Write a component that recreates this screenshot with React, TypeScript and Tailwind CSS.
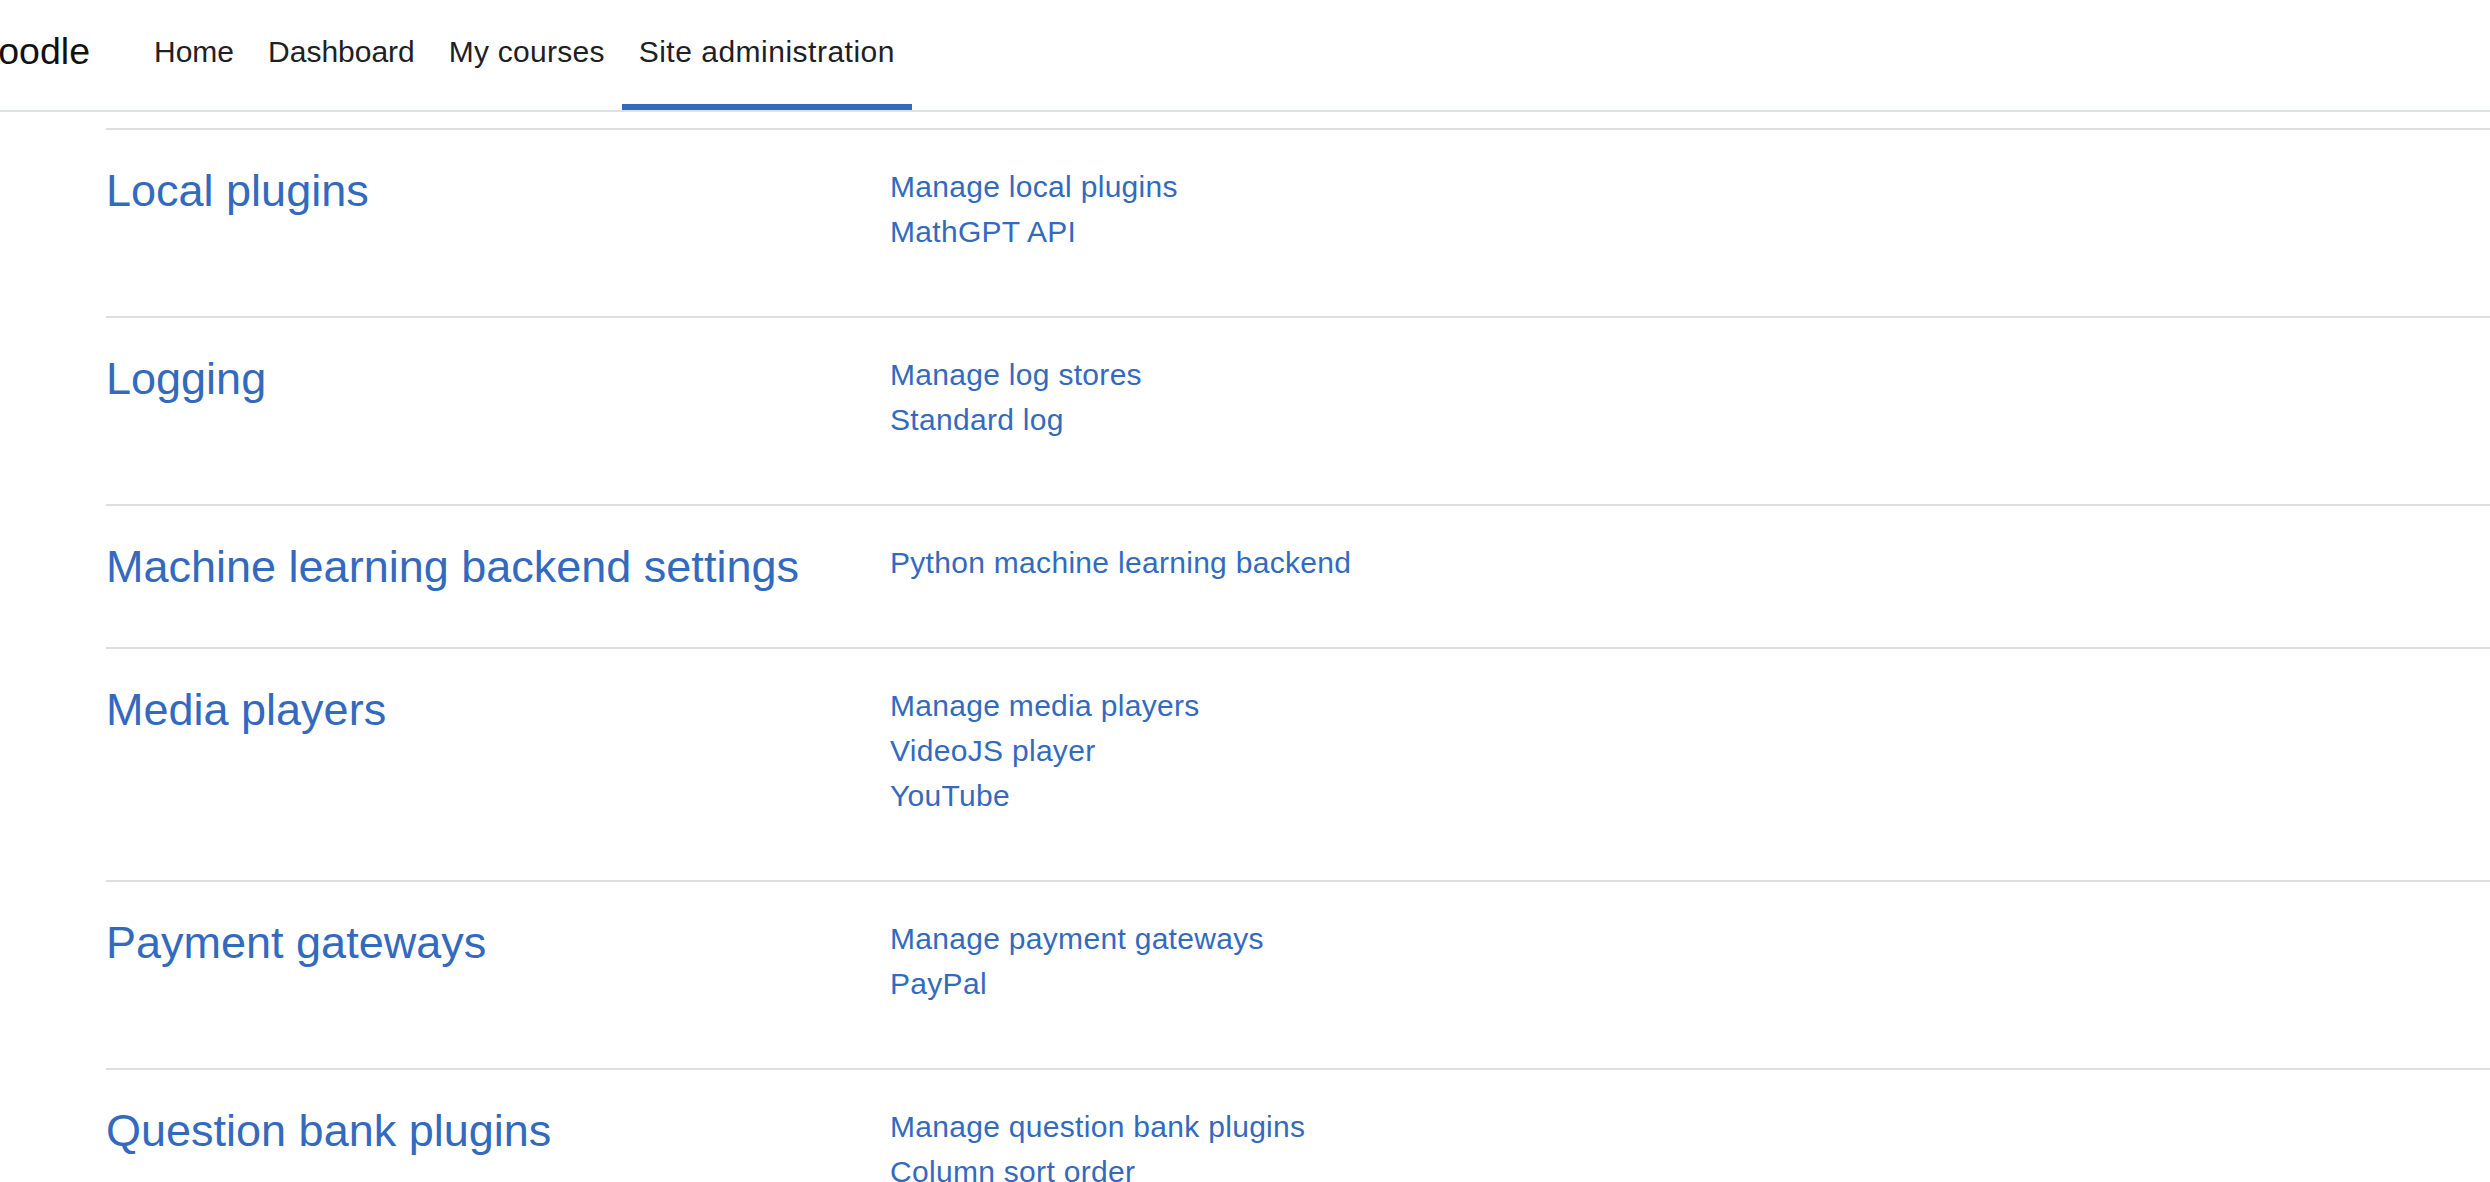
import React from "react";

const sections: { title: string; links: string[] }[] = [
  { title: "Local plugins", links: ["Manage local plugins", "MathGPT API"] },
  { title: "Logging", links: ["Manage log stores", "Standard log"] },
  { title: "Machine learning backend settings", links: ["Python machine learning backend"] },
  { title: "Media players", links: ["Manage media players", "VideoJS player", "YouTube"] },
  { title: "Payment gateways", links: ["Manage payment gateways", "PayPal"] },
  { title: "Question bank plugins", links: ["Manage question bank plugins", "Column sort order"] },
];

const navItems: { label: string; cls: string }[] = [
  {
    label: "Home",
    cls: "flex h-[110px] items-center border-b-[6px] border-transparent px-[17px] pb-[2px] text-[30px] leading-[1.5] text-[#1d2125]",
  },
  {
    label: "Dashboard",
    cls: "flex h-[110px] items-center border-b-[6px] border-transparent px-[17px] pb-[2px] text-[30px] leading-[1.5] text-[#1d2125]",
  },
  {
    label: "My courses",
    cls: "flex h-[110px] items-center border-b-[6px] border-transparent px-[17px] pb-[2px] text-[30px] leading-[1.5] tracking-[0.25px] text-[#1d2125]",
  },
  {
    label: "Site administration",
    cls: "flex h-[110px] items-center border-b-[6px] border-[#336abd] px-[17px] pb-[2px] text-[30px] leading-[1.5] tracking-[0.5px] text-[#1d2125]",
  },
];

export default function App() {
  return (
    <div
      className="h-screen w-full overflow-hidden bg-white"
      style={{ fontFamily: '"Liberation Sans", Arial, sans-serif' }}
    >
      <header className="flex h-[112px] items-stretch border-b-2 border-[#dee2e6] bg-white">
        <div className="ml-[-33px] mr-[47px] flex items-center pb-[8px] text-[37.5px] leading-[1.5] text-[#111]">
          Moodle
        </div>
        <nav className="flex items-stretch">
          {navItems.map((item) => (
            <a key={item.label} className={item.cls}>
              {item.label}
            </a>
          ))}
        </nav>
      </header>
      <main className="mt-[16px] pl-[106px]">
        {sections.map((s) => (
          <section
            key={s.title}
            className="grid grid-cols-[784px_1fr] border-t-2 border-[#dedede] pt-[34px] pb-[53px]"
          >
            <h3 className="text-[45px] leading-[54px] text-[#336abd]">{s.title}</h3>
            <ul className="pb-[9px]">
              {s.links.map((l) => (
                <li key={l} className="text-[30px] leading-[45px] tracking-[0.3px] text-[#336abd]">
                  {l}
                </li>
              ))}
            </ul>
          </section>
        ))}
      </main>
    </div>
  );
}
